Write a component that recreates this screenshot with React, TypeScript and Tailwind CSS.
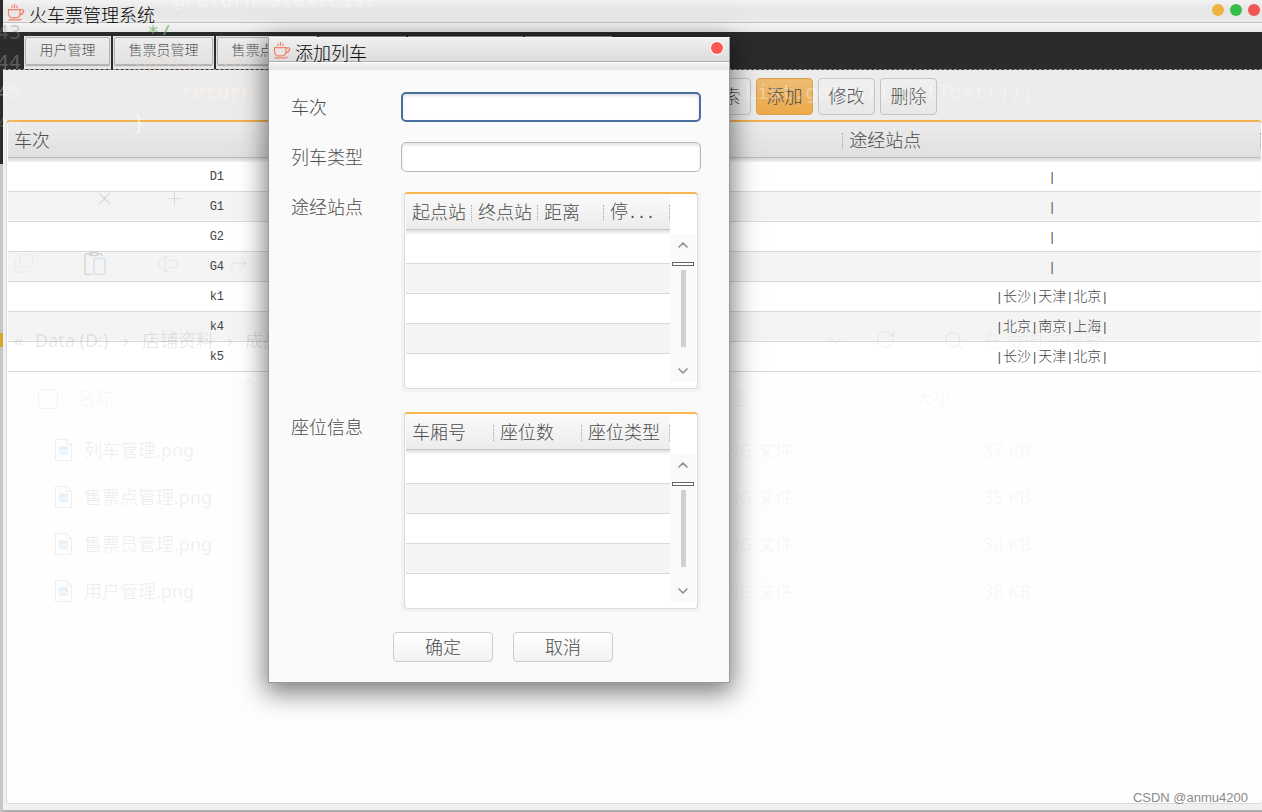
import type { ReactNode } from "react";
import { ChevronDown, ChevronUp, Copy, Forward, Plus, RotateCw, Search, TextCursorInput, X } from "lucide-react";

const SONG = "font-['Liberation_Serif','Noto_Sans_CJK_SC',serif] font-light";
const HEI = "font-['Noto_Sans','Noto_Sans_CJK_SC',sans-serif]";
const MONO = "font-['Liberation_Mono','Noto_Sans_CJK_SC',monospace]";

const tabs = [
  { label: "用户管理", width: "w-[87px]" },
  { label: "售票员管理", width: "w-[101px]" },
  { label: "售票点管理", width: "w-[101px]" },
];

const trains = [
  { id: "D1", stops: [] },
  { id: "G1", stops: [] },
  { id: "G2", stops: [] },
  { id: "G4", stops: [] },
  { id: "k1", stops: ["长沙", "天津", "北京"] },
  { id: "k4", stops: ["北京", "南京", "上海"] },
  { id: "k5", stops: ["长沙", "天津", "北京"] },
];

function CupIcon() {
  return (
    <svg width="18" height="18" viewBox="0 0 18 18" fill="none" stroke="#f4806a" strokeWidth="1.2" className="shrink-0" aria-hidden="true">
      <path d="M5 1.500v2.500M7.500 0v4M10 1.500v2.500" />
      <path d="M1.500 5.600h11.500v4c0 2.600-1.500 4.200-3.800 4.200H5.300c-2.300 0-3.800-1.600-3.800-4.200z" />
      <path d="M13 5.800h2.600c.9 0 1.200.6 1 1.500-.3 1.900-1.600 3.100-3.800 3.300" />
      <path d="M1.500 15.800h11.500l1.500-1" />
    </svg>
  );
}

function PasteIcon() {
  return (
    <svg width="24" height="24" viewBox="0 0 24 24" fill="none" strokeWidth="1.500">
      <path d="M8 3H2.500C1.500 3 1 3.500 1 4.500V22c0 1 .5 1.500 1.500 1.500H8M13 3h3.500c1 0 1.500.5 1.500 1.500V5M6 1.500h7.500v3H6z" stroke="#000" opacity=".13" />
      <rect x="10" y="7.500" width="11" height="16" rx="1.500" stroke="#5aa7e0" opacity=".22" />
    </svg>
  );
}

function PictureFileIcon() {
  return (
    <svg width="17" height="22" viewBox="0 0 17 22" fill="none" className="mr-3 shrink-0">
      <path d="M.5.5h11l5 5v16H.5zM11.500.5v5h5" stroke="#000" opacity=".06" />
      <rect x="4" y="7" width="9" height="9" rx="1.500" fill="#4a9be0" opacity=".12" />
      <path d="M4.500 15.500l4.500-4.500 4 4" stroke="#fff" />
    </svg>
  );
}

function StopList({ stops }: { stops: string[] }) {
  return (
    <>
      <span className={`${MONO} text-xs`}>|</span>
      {stops.map((s) => (
        <span key={s}>
          {s}
          <span className={`${MONO} text-xs`}>|</span>
        </span>
      ))}
    </>
  );
}

function HeadCell({ children, light }: { children?: ReactNode; light?: boolean }) {
  return (
    <th
      className={`h-10 p-0 pb-0.5 pl-1.5 text-left text-lg font-light text-[#4c4c4c] ${
        light
          ? "bg-[linear-gradient(to_bottom,#fafafa_0,#ececec_35px,#c8c8c8_35px,#c8c8c8_36px,#dedede_36px,#fafafa_100%)]"
          : "bg-[linear-gradient(to_bottom,#ececec_0,#e0e0e0_35px,#bdbdbd_35px,#bdbdbd_36px,#d8d8d8_36px,#f4f4f4_100%)]"
      }`}
    >
      <div className="flex h-4 items-center justify-between border-r border-dotted border-[#aaa] leading-4 whitespace-nowrap">
        {children}
      </div>
    </th>
  );
}

function EditGrid({ label, columns }: { label: string; columns: ReactNode[] }) {
  return (
    <div className="h-[200px] rounded bg-[#f3f3f3] px-[3px] pb-[3px]">
      <div className="flex h-full items-start overflow-hidden rounded border border-t-2 border-[#dadada] border-t-[#fcb651] bg-white pl-px">
        <table aria-label={label} className="w-[264px] table-fixed border-separate border-spacing-0">
          <thead>
            <tr>
              {columns.map((c, i) => (
                <HeadCell key={i} light>
                  {c}
                </HeadCell>
              ))}
            </tr>
          </thead>
          <tbody>
            {[0, 1, 2, 3, 4].map((r) => (
              <tr key={r} className="group bg-white even:bg-[#f4f4f4]">
                {columns.map((_, i) => (
                  <td key={i} className="h-[30px] border-b border-[#d9d9d9] p-0 group-last:border-0" />
                ))}
              </tr>
            ))}
          </tbody>
        </table>
        <div className="mt-10 flex h-[148px] w-[26px] flex-col items-center bg-[#fafafa]">
          <button type="button" aria-label="向上滚动" className="flex h-7 items-center pb-1.5 text-[#909090]">
            <ChevronUp size={16} strokeWidth={2.5} />
          </button>
          <div className="h-1 w-[22px] border border-[#666] bg-white" />
          <div className="mt-1 h-[77px] w-[5px] bg-[#d0d0d0]" />
          <button type="button" aria-label="向下滚动" className="flex flex-1 items-center pt-3 text-[#909090]">
            <ChevronDown size={16} strokeWidth={2.5} />
          </button>
        </div>
      </div>
    </div>
  );
}

/* Windows lying behind the translucent main frame */
const codeTexts = [
  { x: 148, y: -12, t: "* @return StextList", c: "text-[#f8f8f8]/70" },
  { x: 181, y: 80, t: "return", c: "text-[#fff3ea]/70" },
  { x: 733, y: 80, t: "tList.get(a)).getText());", c: "text-white/35" },
  { x: 135, y: 50, t: "public int", c: "text-[#f5dccd]/35" },
  { x: 133, y: 111, t: "}", c: "text-white/60" },
  { x: -3, y: 20, t: "43", c: "text-[#909090]/40" },
  { x: -3, y: 50, t: "44", c: "text-[#909090]/50" },
  { x: -3, y: 80, t: "45", c: "text-white/35" },
  { x: -3, y: 111, t: "46", c: "text-white/20" },
];

const fileTexts = [
  { x: 14, y: 340, t: "«" },
  { x: 35, y: 340, t: "Data (D:)" },
  { x: 123, y: 340, t: "›" },
  { x: 142, y: 340, t: "店铺资料" },
  { x: 227, y: 340, t: "›" },
  { x: 245, y: 340, t: "成品" },
  { x: 984, y: 340, t: "在 截图 中搜索" },
  { x: 77, y: 398, t: "名称" },
  { x: 713, y: 398, t: "类型" },
  { x: 915, y: 398, t: "大小" },
];

const files = [
  { y: 450, name: "列车管理.png", size: "37 KB" },
  { y: 497, name: "售票点管理.png", size: "35 KB" },
  { y: 544, name: "售票员管理.png", size: "34 KB" },
  { y: 591, name: "用户管理.png", size: "38 KB" },
];

const ghostIcons = [
  { x: 94, y: 188, icon: <X size={21} strokeWidth={1.4} />, c: "text-black/10" },
  { x: 164, y: 188, icon: <Plus size={21} strokeWidth={1.4} />, c: "text-black/10" },
  { x: 13, y: 253, icon: <Copy size={21} strokeWidth={1.4} className="-scale-y-100" />, c: "text-[#6aa5d8]/10" },
  { x: 84, y: 251, icon: <PasteIcon />, c: "" },
  { x: 157, y: 253, icon: <TextCursorInput size={22} strokeWidth={1.4} />, c: "text-[#6a8cb0]/10" },
  { x: 228, y: 252, icon: <Forward size={22} strokeWidth={1.4} />, c: "text-[#6a8cb0]/10" },
  { x: 825, y: 330, icon: <ChevronDown size={21} strokeWidth={1.4} />, c: "text-black/5" },
  { x: 875, y: 329, icon: <RotateCw size={21} strokeWidth={1.4} />, c: "text-black/5" },
  { x: 943, y: 330, icon: <Search size={21} strokeWidth={1.4} />, c: "text-black/5" },
  { x: 240, y: 373, icon: <ChevronUp size={18} strokeWidth={1.4} />, c: "text-black/5" },
];

function Backdrop() {
  return (
    <div aria-hidden="true" className="pointer-events-none absolute inset-0 overflow-hidden font-normal select-none">
      {codeTexts.map((g) => (
        <span
          key={g.t}
          className={`absolute font-['DejaVu_Sans_Mono',monospace] text-xl leading-6 whitespace-nowrap ${g.c}`}
          style={{ left: g.x, top: g.y }}
        >
          {g.t}
        </span>
      ))}
      <span className="absolute top-5 left-[147px] h-[15px] overflow-hidden font-['DejaVu_Sans_Mono',monospace] text-xl leading-6 text-[#5fae5f]/70">
        */
      </span>
      {fileTexts.map((g) => (
        <span
          key={g.x + g.t}
          className={`absolute -translate-y-1/2 ${HEI} text-lg leading-6 whitespace-nowrap ${g.x < 300 && g.y === 340 ? "text-black/10" : "text-black/4"}`}
          style={{ left: g.x, top: g.y }}
        >
          {g.t}
        </span>
      ))}
      {files.map((f) => (
        <div key={f.name} className={`absolute left-[55px] flex -translate-y-1/2 items-center text-lg leading-6 text-black/7 ${HEI}`} style={{ top: f.y }}>
          <PictureFileIcon />
          <span className="w-[631px]">{f.name}</span>
          <span className="w-[268px] text-black/4">PNG 文件</span>
          <span className="text-black/4">{f.size}</span>
        </div>
      ))}
      {ghostIcons.map(({ x, y, icon, c }) => (
        <span key={`${x}-${y}`} className={`absolute ${c}`} style={{ left: x, top: y }}>
          {icon}
        </span>
      ))}
      <span className="absolute top-[389px] left-[38px] size-5 rounded border border-black/5" />
    </div>
  );
}

function TrainDialog() {
  return (
    <div
      role="dialog"
      aria-labelledby="dialog-title"
      className="absolute top-[37px] left-[268px] w-[462px] border border-[#999] border-t-[#f8f8f8] bg-[#fafafa] shadow-[0_7px_24px_3px_rgba(0,0,0,0.5)]"
    >
      <header className="flex h-8 items-start bg-[linear-gradient(to_bottom,#f0f0f0_0,#dcdcdc_23px,#adadad_23px,#adadad_24px,#ffffff_24px,#ffffff_25px,#f2f2f2_25px,#e6e6e6_100%)] pl-1">
        <div className="mt-1">
          <CupIcon />
        </div>
        <h2 id="dialog-title" className={`mt-[3px] ml-1 flex-1 text-lg leading-6 text-black ${HEI}`}>
          添加列车
        </h2>
        <button type="button" aria-label="关闭" className="mt-1 mr-1.5 size-3 rounded-full bg-[#fc5753] ring-1 ring-white" />
      </header>
      <form className="pt-[22px] pr-7 pb-5 pl-[22px] text-lg text-[#4c4c4c]" onSubmit={(e) => e.preventDefault()}>
        <div className="grid grid-cols-[110px_1fr] gap-y-5 leading-8">
          <label htmlFor="train-no" className="h-[30px]">车次</label>
          <input
            id="train-no"
            className="h-[30px] w-full rounded-[5px] border-2 border-[#47709f] bg-white px-2 shadow-[inset_0_2px_3px_rgba(0,0,0,0.12)] outline-none"
          />
          <label htmlFor="train-type" className="h-[30px]">列车类型</label>
          <input
            id="train-type"
            className="h-[30px] w-full rounded-[5px] border border-[#b9b9b9] bg-white px-2 shadow-[inset_0_2px_3px_rgba(0,0,0,0.12)] outline-none"
          />
          <span>途经站点</span>
          <EditGrid
            label="途经站点"
            columns={[
              "起点站",
              "终点站",
              "距离",
              <span key="stay">
                停<span className={`${MONO} text-[15px]`}>...</span>
              </span>,
            ]}
          />
          <span>座位信息</span>
          <EditGrid label="座位信息" columns={["车厢号", "座位数", "座位类型"]} />
        </div>
        <div className="mt-5 flex gap-5 pl-[102px]">
          {["确定", "取消"].map((b) => (
            <button key={b} type="button" className="h-[30px] w-[100px] rounded border border-[#cdcdcd] bg-linear-to-b from-white to-[#f2f2f2] pt-0.5 leading-6">
              {b}
            </button>
          ))}
        </div>
      </form>
    </div>
  );
}

export default function App() {
  return (
    <div className={`relative flex min-h-screen flex-col overflow-hidden bg-[linear-gradient(to_bottom,#2b2b2b_0,#2b2b2b_164px,#c6c6c6_164px,#c6c6c6_333px,#d8a52c_333px,#d8a52c_347px,#c6c6c6_347px)] pl-[3px] ${SONG}`}>
      <header className="flex h-8 items-start bg-[linear-gradient(to_bottom,#f2f2f2_0,#e6e6e6_10px,#eaeaea_22px,#c2c2c2_22px,#c2c2c2_23px,#f4f4f4_23px,#e8e8e8_100%)] pl-1">
        <div className="mt-1">
          <CupIcon />
        </div>
        <h1 className={`mt-[3px] ml-1 flex-1 text-lg leading-6 text-black ${HEI}`}>火车票管理系统</h1>
        <div className="mt-1 mr-0.5 flex gap-1.5">
          <button type="button" aria-label="最小化" className="size-3 rounded-full bg-[#efb440]" />
          <button type="button" aria-label="最大化" className="size-3 rounded-full bg-[#35bf49]" />
          <button type="button" aria-label="退出" className="size-3 rounded-full bg-[#f05654]" />
        </div>
      </header>

      <nav className="flex h-[38px] gap-[2px] border-b border-dashed border-[#999] bg-[#2b2b2b] pt-1 pl-[21px]">
        {tabs.map((t) => (
          <div key={t.label} className={`h-[33px] bg-[#e6e6e6] px-px pt-px ${t.width}`}>
            <button type="button" className="h-7 w-full rounded-xs border border-[#b5b5b5] bg-linear-to-b from-[#ededed] to-[#e2e2e2] text-sm leading-[26px] whitespace-nowrap text-[#555] shadow-[0_1px_1px_#aaa]">
              {t.label}
            </button>
          </div>
        ))}
        <div className="h-px w-[87px] bg-[#999]" />
        <div className="h-px w-[115px] bg-[#999]" />
        <div className="h-px w-[87px] bg-[#999]" />
      </nav>

      <main className="flex flex-1 flex-col border-b-2 border-[#aeaeae] bg-[#f0f0f0]">
        <div className="flex h-[50px] items-start justify-center gap-[5px] bg-[#ececec] pt-2 pl-[5px]">
          <div className="w-[356px]" />
          {["搜索", "添加", "修改", "删除"].map((b) => (
            <button
              key={b}
              type="button"
              className={`h-[37px] w-[57px] rounded border pt-px text-lg whitespace-nowrap text-[#4c4c4c] ${
                b === "添加"
                  ? "border-[#dba04a] bg-linear-to-b from-[#edbb74] to-[#eeaa48]"
                  : "border-[#c4c4c4] bg-linear-to-b from-[#f0f0f0] to-[#e8e8e8]"
              }`}
            >
              {b}
            </button>
          ))}
        </div>
        <div className="mb-1.5 ml-[3px] flex-1 rounded border border-t-2 border-r-0 border-[#d9d9d9] border-t-[#f2b04f] bg-[#fefefe] px-px">
          <table className="w-full table-fixed border-separate border-spacing-0">
            <thead>
              <tr>
                <HeadCell>车次</HeadCell>
                <HeadCell />
                <HeadCell>途经站点</HeadCell>
              </tr>
            </thead>
            <tbody>
              {trains.map((t) => (
                <tr key={t.id} className="bg-white text-center text-sm leading-5 text-[#444] even:bg-[#f4f4f4]">
                  <td className={`h-[30px] border-b border-[#d9d9d9] p-0 text-xs ${MONO}`}>{t.id}</td>
                  <td className="border-b border-[#d9d9d9] p-0" />
                  <td className="border-b border-[#d9d9d9] p-0">
                    <StopList stops={t.stops} />
                  </td>
                </tr>
              ))}
            </tbody>
          </table>
        </div>
      </main>

      <Backdrop />
      <TrainDialog />
      <span className="absolute right-[14px] bottom-[6px] font-['Liberation_Sans',sans-serif] text-[13px] leading-4 font-normal text-[#8a8a8a]">CSDN @anmu4200</span>
    </div>
  );
}
